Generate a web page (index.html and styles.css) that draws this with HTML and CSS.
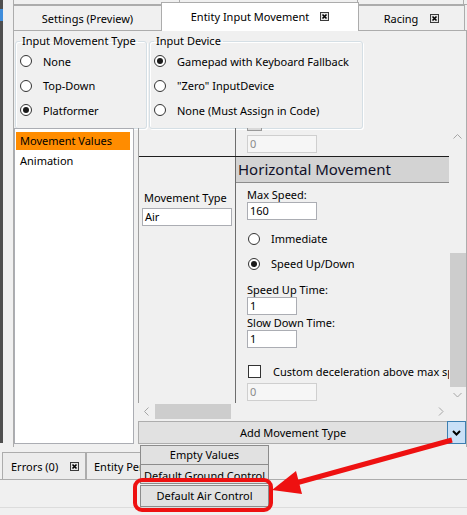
FILE: index.html
```html
<!DOCTYPE html>
<html>
<head>
<meta charset="utf-8">
<link rel="stylesheet" href="styles.css">
</head>
<body>
<div class="screen">
  <div class="upper">
    <div class="strip"><div class="strip-icon"></div></div>
    <div class="tabctl">
      <div class="parent-row"><div class="pcell pc1"></div><div class="pcell pc2"></div><div class="pcell pc3"></div></div>
      <div class="tabrow">
        <div class="tab t1"><span>Settings (Preview)</span></div>
        <div class="tab t2 active"><span>Entity Input Movement</span>
          <svg class="xicon" width="9" height="9" viewBox="0 0 9 9"><rect x="0.5" y="0.5" width="8" height="8" fill="#e4e4e4" stroke="#3a3a3a"/><path d="M2.5 2.5 L6.5 6.5 M6.5 2.5 L2.5 6.5" stroke="#000" stroke-width="1.6"/></svg>
        </div>
        <div class="tab t3"><span>Racing</span>
          <svg class="xicon" width="9" height="9" viewBox="0 0 9 9"><rect x="0.5" y="0.5" width="8" height="8" fill="#e4e4e4" stroke="#3a3a3a"/><path d="M2.5 2.5 L6.5 6.5 M6.5 2.5 L2.5 6.5" stroke="#000" stroke-width="1.6"/></svg>
        </div>
      </div>
      <div class="tabpanel">
        <div class="groups">
          <fieldset class="gb gb1">
            <legend>Input Movement Type</legend>
            <div class="radio"><span class="rb"></span><span>None</span></div>
            <div class="radio"><span class="rb"></span><span>Top-Down</span></div>
            <div class="radio"><span class="rb on"></span><span>Platformer</span></div>
          </fieldset>
          <fieldset class="gb gb2">
            <legend>Input Device</legend>
            <div class="radio"><span class="rb on"></span><span>Gamepad with Keyboard Fallback</span></div>
            <div class="radio"><span class="rb"></span><span>"Zero" InputDevice</span></div>
            <div class="radio"><span class="rb"></span><span>None (Must Assign in Code)</span></div>
          </fieldset>
        </div>
        <div class="lower">
          <div class="list">
            <div class="item sel">Movement Values</div>
            <div class="item">Animation</div>
          </div>
          <div class="editor">
            <div class="scroller">
              <div class="viewport">
                <div class="trow rowA">
                  <div class="lcell"></div>
                  <div class="rcell">
                    <div class="cut-check"></div>
                    <div class="tb dis w70">0</div>
                  </div>
                </div>
                <div class="trow rowB">
                  <div class="lcell lpad">
                    <div class="lbl ml2">Movement Type</div>
                    <div class="tb w90">Air</div>
                  </div>
                  <div class="rcell">
                    <div class="hdr">Horizontal Movement</div>
                    <div class="props">
                      <div class="lbl first">Max Speed:</div>
                      <div class="tb w70">160</div>
                      <div class="radio prow r1"><span class="rb"></span><span>Immediate</span></div>
                      <div class="radio prow"><span class="rb on"></span><span>Speed Up/Down</span></div>
                      <div class="lbl l15 mt6">Speed Up Time:</div>
                      <div class="tb w50">1</div>
                      <div class="lbl l15">Slow Down Time:</div>
                      <div class="tb w50">1</div>
                      <div class="check"><span class="cb"></span><span>Custom deceleration above max speed</span></div>
                      <div class="tb dis w70 mt2">0</div>
                    </div>
                  </div>
                </div>
              </div>
              <div class="vscroll">
                <div class="arrow"><svg width="17" height="17" viewBox="0 0 17 17"><polyline points="4.5,10.5 8.5,6.5 12.5,10.5" fill="none" stroke="#a6a6a6" stroke-width="1"/></svg></div>
                <div class="vtrack"><div class="vthumb"></div></div>
                <div class="arrow"><svg width="17" height="17" viewBox="0 0 17 17"><polyline points="4.5,7 8.5,11 12.5,7" fill="none" stroke="#a6a6a6" stroke-width="1"/></svg></div>
              </div>
              <div class="hscroll">
                <div class="arrow"><svg width="17" height="17" viewBox="0 0 17 17"><polyline points="10.5,4.5 6.5,8.5 10.5,12.5" fill="none" stroke="#a6a6a6" stroke-width="1"/></svg></div>
                <div class="htrack"><div class="hthumb"></div></div>
                <div class="arrow"><svg width="17" height="17" viewBox="0 0 17 17"><polyline points="7,4.5 11,8.5 7,12.5" fill="none" stroke="#a6a6a6" stroke-width="1"/></svg></div>
              </div>
              <div class="corner"></div>
            </div>
            <div class="addrow">
              <div class="addbtn">Add Movement Type</div>
              <div class="ddbtn"><svg width="17" height="21" viewBox="0 0 17 21"><polyline points="5,9 8.5,12.5 12,9" fill="none" stroke="#000" stroke-width="2"/></svg></div>
            </div>
          </div>
        </div>
      </div>
    </div>
  </div>
  <div class="bottom-tabs">
    <div class="btab btab1"><span>Errors (0)</span>
      <svg class="xicon" width="9" height="9" viewBox="0 0 9 9"><rect x="0.5" y="0.5" width="8" height="8" fill="#e4e4e4" stroke="#3a3a3a"/><path d="M2.5 2.5 L6.5 6.5 M6.5 2.5 L2.5 6.5" stroke="#000" stroke-width="1.6"/></svg>
    </div>
    <div class="btab btab2"><span>Entity Performance</span></div>
  </div>
  <div class="bottom-panel"></div>

  <div class="dropdown">
    <div class="ditem">Empty Values</div>
    <div class="ditem d2">Default Ground Control</div>
    <div class="ditem d3">Default Air Control</div>
  </div>

  <svg class="annot" width="467" height="515" viewBox="0 0 467 515">
    <rect x="135" y="480" width="136" height="30" rx="7" ry="7" fill="none" stroke="#ee1111" stroke-width="4"/>
    <line x1="452" y1="440" x2="296" y2="483" stroke="#ee1111" stroke-width="5"/>
    <polygon points="272,490 296,471 302,494" fill="#ee1111"/>
  </svg>
</div>
</body>
</html>
```

FILE: styles.css
```css
* { box-sizing: border-box; }
html, body { margin: 0; padding: 0; }
body {
  width: 467px;
  height: 515px;
  overflow: hidden;
  background: #f0f0f0;
  font-family: "Noto Sans", "Open Sans", sans-serif;
  font-size: 11px;
  color: #000;
}
.screen { position: relative; width: 467px; height: 515px; }

.upper { display: flex; height: 447px; }
.strip { width: 3px; height: 443px; background: #4f4f4f; flex: none; }
.strip-icon { width: 3px; height: 12px; margin-top: 9px; background: #3f8ddb; }

.tabctl { margin-left: 10px; width: 454px; display: flex; flex-direction: column; }
.parent-row { display: flex; height: 5px; border-bottom: 1px solid #acacac; flex: none; }
.pcell { height: 100%; border-left: 1px solid #acacac; }
.pc1 { width: 166px; }
.pc2 { width: 178px; }
.pc3 { width: 107px; border-right: 1px solid #acacac; }

.tabrow { display: flex; align-items: flex-end; height: 25px; flex: none; }
.tab {
  height: 25px;
  border: 1px solid #acacac;
  border-bottom: none;
  background: #f0f0f0;
  display: flex;
  align-items: center;
  justify-content: center;
  gap: 11px;
  margin-left: -1px;
  white-space: nowrap;
}
.t1 { width: 149px; margin-left: 0; }
.t2 { width: 198px; }
.t3 { width: 107px; gap: 12px; }
.tab.active {
  height: 29px;
  margin-bottom: -1px;
  background: #fff;
  position: relative;
  z-index: 1;
  padding-bottom: 1px;
}
.xicon { display: block; flex: none; }

.tabpanel {
  flex: 1;
  border: 1px solid #acacac;
  border-bottom: none;
  background: #f0f0f0;
  display: flex;
  flex-direction: column;
}

.groups { display: flex; gap: 2px; height: 95px; margin-top: 2px; align-items: flex-start; flex: none; }
.gb {
  margin: 0;
  border: 1px solid #d5dfe5;
  border-radius: 3px;
  padding: 0 4px 5px 4px;
  min-width: 0;
  box-shadow: inset 1px 1px 0 #fff, 1px 1px 0 #fff;
}
.gb legend { padding: 0 2px; line-height: 16px; }
.gb1 { width: 132px; margin-left: 1px; }
.gb2 { width: 214px; }

.radio { display: flex; align-items: center; gap: 11px; height: 24.5px; white-space: nowrap; }
.rb {
  width: 12px; height: 12px; flex: none;
  border: 1px solid #333;
  border-radius: 50%;
  background: #fff;
  display: flex; align-items: center; justify-content: center;
}
.rb.on::after { content: ""; width: 6px; height: 6px; border-radius: 50%; background: #1a1a1a; }

.lower { display: flex; gap: 4px; height: 318px; flex: none; }
.list {
  width: 120px; height: 316px; flex: none;
  border: 1px solid #abadb3;
  background: #fff;
  padding: 3px 3px 0 1px;
}
.item { height: 18px; line-height: 18px; padding-left: 4px; margin-bottom: 2px; white-space: nowrap; }
.item.sel { background: #ff8c00; }

.editor { width: 328px; flex: none; display: flex; flex-direction: column; }
.scroller { display: grid; grid-template-columns: 311px 17px; grid-template-rows: 275px 17px; }
.viewport { border-left: 1px solid #a0a0a0; overflow: hidden; }
.trow { display: flex; }
.lcell { width: 97px; flex: none; border-right: 1px solid #6d6d6d; }
.rcell { width: 400px; flex: none; }
.rowA { height: 28px; }
.rowA .rcell { padding-left: 11px; }
.rowB { border-top: 1px solid #1e1e1e; height: 400px; }
.lpad { padding: 34px 0 0 3px; }
.ml2 { margin-left: 2px; }

.cut-check { width: 15px; height: 3px; border: 1px solid #9a9a9a; border-top: none; background: #d9d9d9; }
.tb {
  height: 18px;
  border: 1px solid #abadb3;
  background: #fff;
  padding: 0 2px;
  line-height: 16px;
  white-space: nowrap;
}
.tb.dis { background: #f6f6f6; border-color: #cfcfcf; color: #8a8a8a; }
.rowA .tb.dis { margin-top: 4px; }
.w70 { width: 70px; }
.w50 { width: 50px; }
.w90 { width: 90px; }
.mt2 { margin-top: 2px; }
.mt6 { margin-top: 6px; }

.lbl { line-height: 14px; white-space: nowrap; }
.lcell .lbl { margin-bottom: 3px; }
.l15 { line-height: 15px; }
.hdr {
  height: 26px;
  background: #d3d3d3;
  border-bottom: 1px solid #8c8c8c;
  font-size: 15px;
  line-height: 25px;
  padding-left: 2px;
  color: #101028;
  white-space: nowrap;
}
.props { padding-left: 11px; }
.lbl.first { margin-top: 5px; }
.prow { height: 25px; padding-left: 1px; }
.prow.r1 { margin-top: 6px; }
.check { display: flex; align-items: center; gap: 12px; height: 20px; margin-top: 13px; padding-left: 1px; white-space: nowrap; }
.cb { width: 13px; height: 13px; border: 1px solid #333; background: #fff; flex: none; }

.vscroll { display: flex; flex-direction: column; background: #f0f0f0; }
.arrow { width: 17px; height: 17px; flex: none; }
.arrow svg { display: block; }
.vtrack { flex: 1; display: flex; flex-direction: column; justify-content: flex-end; }
.vthumb { height: 134px; margin: 0 0 -1px 1px; background: #cdcdcd; }
.hscroll { display: flex; background: #f0f0f0; }
.htrack { flex: 1; display: flex; align-items: stretch; }
.hthumb { width: 76px; background: #cdcdcd; margin: 1px 0; }
.corner { background: #f0f0f0; }

.addrow { display: flex; margin-top: 1px; height: 23px; }
.addbtn {
  flex: 1;
  border: 1px solid #adadad;
  background: #e1e1e1;
  text-align: center;
  line-height: 21px;
}
.ddbtn {
  width: 19px; flex: none;
  margin-left: -1px;
  border: 1px solid #3c7fb1;
  background: #c9e0f7;
}
.ddbtn svg { display: block; }

.bottom-tabs { display: flex; margin-top: 5px; height: 27px; padding-left: 2px; }
.btab {
  border: 1px solid #acacac;
  border-bottom: none;
  background: #ececec;
  display: flex;
  align-items: center;
  white-space: nowrap;
  overflow: hidden;
}
.btab1 { width: 84px; padding-left: 8px; gap: 12px; }
.btab2 { width: 55px; padding-left: 7px; margin-left: 0; border-right: none; }
.bottom-panel { border-top: 1px solid #acacac; height: 29px; border-bottom: 1px solid #dcdcdc; }

.dropdown { position: absolute; left: 140px; top: 445px; width: 129px; }
.ditem {
  height: 20px;
  border: 1px solid #8c8c8c;
  background: #e1e1e1;
  text-align: center;
  line-height: 18px;
  white-space: nowrap;
  overflow: hidden;
}
.d2 { margin-top: -1px; padding-top: 2px; }
.d3 { margin-top: 1px; height: 22px; line-height: 20px; }

.annot { position: absolute; left: 0; top: 0; pointer-events: none; }
```
